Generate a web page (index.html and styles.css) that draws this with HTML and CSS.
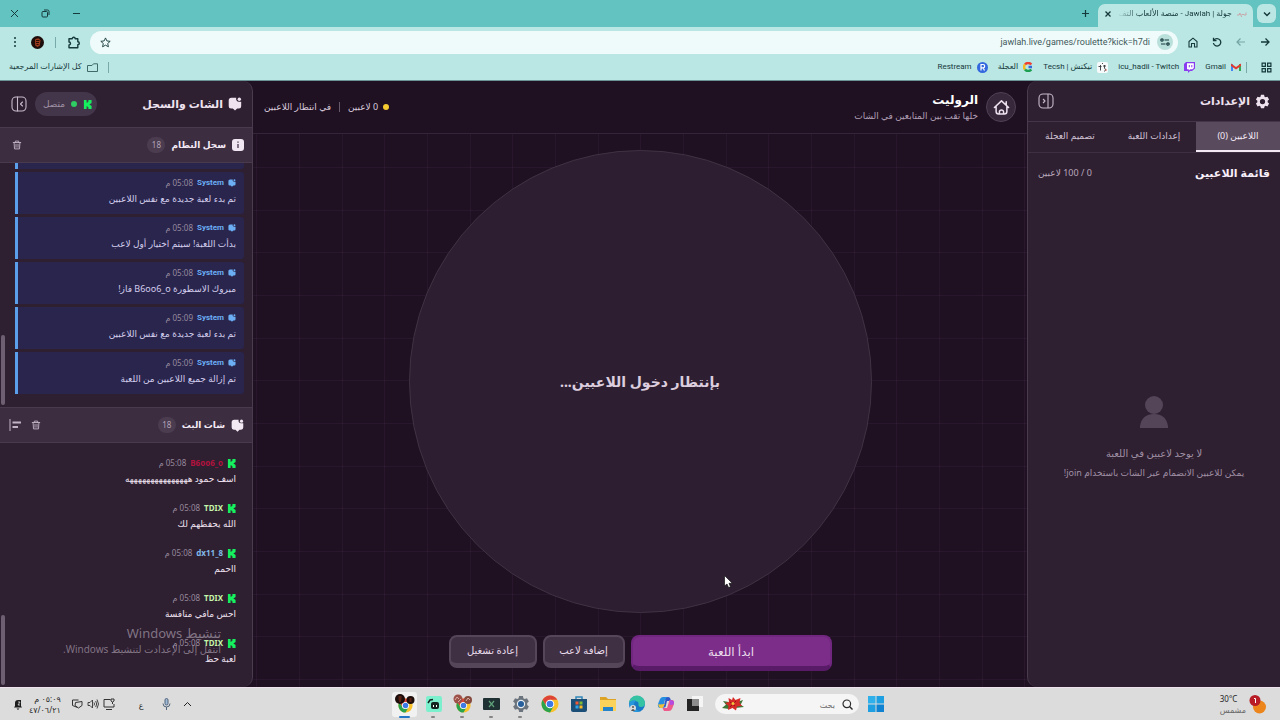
FILE: index.html
```html
<!DOCTYPE html>
<html lang="ar" dir="rtl">
<head>
<meta charset="utf-8">
<meta name="viewport" content="width=device-width, initial-scale=1">
<title>جولة | Jawlah - منصة الألعاب</title>
<link rel="stylesheet" href="styles.css">
</head>
<body>
<svg class="defs" aria-hidden="true">
  <symbol id="kick" viewBox="0 0 10 10"><path fill="#16f05e" d="M1 0h3v3h1V2h1V0h3.500v3.500h-1v1h-1v1h1v1h1V10H6V8H5V7H4v3H1z"/></symbol>
  <symbol id="chat" viewBox="0 0 14 14"><path fill="currentColor" d="M3.500.8h4.800a2.800 2.800 0 0 0 2.600 3.900h2.300v4.500a2.300 2.300 0 0 1-2.300 2.300H9.200L7 13.600l-2.200-2.100H3A2.300 2.300 0 0 1 .700 9.200V3.600A2.800 2.800 0 0 1 3.500.8z"/><circle cx="11.300" cy="2.300" r="1.700" fill="currentColor"/></symbol>
  <symbol id="trash" viewBox="0 0 12 12"><g fill="none" stroke="currentColor" stroke-width="1.100" stroke-linecap="round"><path d="M1.500 3h9M4 3V1.300h4V3M2.500 3.200l.5 7.500h6l.5-7.500M4.800 5v3.800M7.200 5v3.800"/></g></symbol>
  <symbol id="panel" viewBox="0 0 16 16"><g fill="none" stroke="currentColor" stroke-width="1.100" stroke-linecap="round" stroke-linejoin="round"><rect x="1" y="1" width="14" height="14" rx="4"/><path d="M6.500 1v14M11.500 6l-2 2 2 2"/></g></symbol>
  <symbol id="house" viewBox="0 0 18 18"><g fill="none" stroke="currentColor" stroke-width="1.600" stroke-linecap="round" stroke-linejoin="round"><path d="M1.500 9 9 2l7.500 7M3.300 8v5.300Q3.300 16 6 16h6q2.700 0 2.700-2.700V8M14 6V2.800M6.800 15.500V13.800a2.200 2.200 0 0 1 4.400 0v1.700"/></g></symbol>
  <symbol id="gear" viewBox="0 0 16 16"><path fill="currentColor" fill-rule="evenodd" d="M6.300.8h3.400l.4 2 1.200.7 2-.7 1.700 3-1.500 1.400v1.600l1.500 1.400-1.700 3-2-.7-1.200.7-.4 2H6.300l-.4-2-1.200-.7-2 .7-1.700-3 1.500-1.400V7.200L1 5.800l1.700-3 2 .7 1.200-.7zM8 5.200a2.800 2.800 0 1 0 0 5.600 2.800 2.800 0 0 0 0-5.600z"/></symbol>
  <symbol id="chrome" viewBox="0 0 18 18"><circle cx="9" cy="9" r="8.500" fill="#f9c22b"/><path fill="#dd4337" d="M1.640 4.750A8.500 8.500 0 0 1 16.360 4.750H9L5.300 11z"/><path fill="#2ba24c" d="M1.640 4.750A8.500 8.500 0 0 0 9 17.500L12.700 11 9 13.200 5.300 11z"/><circle cx="9" cy="9" r="4.300" fill="#fff"/><circle cx="9" cy="9" r="3.300" fill="#3d79e4"/></symbol>
</svg>

<header class="browser">
  <div class="tabstrip">
    <button class="tab-menu" aria-label="البحث في علامات التبويب"><svg width="8" height="8" viewBox="0 0 8 8"><path d="M1 2.500 4 5.500l3-3" fill="none" stroke="#16393b" stroke-width="1.500"/></svg></button>
    <div class="tab"><svg width="11" height="6" viewBox="0 0 11 6"><path d="M0 4h2l1-2v2h2l1-1 1 1h2V1.500M4 5.500h1" fill="none" stroke="#c99da0" stroke-width=".9"/></svg><span class="tab-title">جولة | Jawlah - منصة الألعاب التف</span>
      <button class="plain" aria-label="إغلاق علامة التبويب"><svg width="8" height="8" viewBox="0 0 8 8"><path d="m1.500 1.500 5 5m0-5-5 5" stroke="#16393b" stroke-width="1.300"/></svg></button></div>
    <button class="plain new-tab" aria-label="علامة تبويب جديدة"><svg width="9" height="9" viewBox="0 0 9 9"><path d="M4.500 1v7M1 4.500h7" stroke="#16393b" stroke-width="1.200"/></svg></button>
    <div class="window-buttons">
      <button class="plain" aria-label="تصغير"><svg width="9" height="9" viewBox="0 0 9 9"><path d="M1 4.500h7" stroke="#16393b"/></svg></button>
      <button class="plain" aria-label="استعادة"><svg width="9" height="9" viewBox="0 0 9 9"><g fill="none" stroke="#16393b"><rect x="1" y="2.500" width="5.500" height="5.500" rx="1"/><path d="M3 1h3.500A1.500 1.500 0 0 1 8 2.500V6"/></g></svg></button>
      <button class="plain" aria-label="إغلاق"><svg width="9" height="9" viewBox="0 0 9 9"><path d="m1 1 7 7m0-7L1 8" stroke="#16393b"/></svg></button>
    </div>
  </div>
  <div class="toolbar">
    <button class="plain" aria-label="رجوع"><svg width="10" height="10" viewBox="0 0 10 10"><path d="M1 5h8M5.500 1.500 9 5 5.500 8.500" fill="none" stroke="#16393b" stroke-width="1.300"/></svg></button>
    <button class="plain" aria-label="تقدم"><svg width="10" height="10" viewBox="0 0 10 10"><path d="M9 5H1m3.500-3.500L1 5l3.500 3.500" fill="none" stroke="#74a5a5" stroke-width="1.200"/></svg></button>
    <button class="plain" aria-label="إعادة تحميل"><svg width="10" height="10" viewBox="0 0 10 10"><path d="M2 3.200A3.700 3.700 0 1 1 1.400 6M1.500.8V3.600h3" fill="none" stroke="#16393b" stroke-width="1.300"/></svg></button>
    <button class="plain" aria-label="الصفحة الرئيسية"><svg width="10" height="11" viewBox="0 0 10 11"><path d="M1 4.500 5 1.200l4 3.300V10H6.500V6.500h-3V10H1z" fill="none" stroke="#16393b" stroke-width="1.100"/></svg></button>
    <div class="address">
      <button class="site-info" aria-label="معلومات الموقع"><svg width="10" height="8" viewBox="0 0 10 8"><g fill="none" stroke="#16393b" stroke-width="1.200"><circle cx="2" cy="2" r="1.200"/><path d="M4.500 2H9M1 6h4.500"/><circle cx="8" cy="6" r="1.200"/></g></svg></button>
      <input type="text" dir="ltr" aria-label="عنوان الموقع" value="jawlah.live/games/roulette?kick=h7di">
      <button class="plain" aria-label="إضافة إشارة"><svg width="11" height="11" viewBox="0 0 12 12"><path d="m6 1 1.500 3.300 3.600.4-2.700 2.400.8 3.600L6 8.900l-3.200 1.800.8-3.600L.9 4.700l3.600-.4z" fill="none" stroke="#16393b" stroke-linejoin="round"/></svg></button>
    </div>
    <button class="plain ext" aria-label="الإضافات"><svg width="13" height="13" viewBox="0 0 13 13"><path d="M2 2.800h3.200a1.500 1.500 0 0 1 3 0h2.600v3a1.500 1.500 0 0 1 0 3v3H2V9a1.500 1.500 0 0 0 0-3z" fill="none" stroke="#16393b" stroke-width="1.400" stroke-linejoin="round"/></svg></button>
    <i class="bar"></i>
    <button class="plain avatar" aria-label="الملف الشخصي"><svg width="13" height="13" viewBox="0 0 13 13"><circle cx="6.500" cy="6.500" r="6.500" fill="#1d0d0b"/><path d="M4 3.500 6 2.500h2l1.500 2-.7 5L6.500 11 4.200 9.500z" fill="#9b3b1c"/><path d="M5 4.500h3.500M5 6.500h3M5.500 8.500h2" stroke="#2b0d08"/></svg></button>
    <button class="plain" aria-label="المزيد"><svg width="4" height="12" viewBox="0 0 4 12"><g fill="#16393b"><circle cx="2" cy="2" r="1"/><circle cx="2" cy="6" r="1"/><circle cx="2" cy="10" r="1"/></g></svg></button>
  </div>
  <nav class="bookmarks">
    <button class="plain" aria-label="التطبيقات"><svg width="11" height="11" viewBox="0 0 10 10"><path d="M1 1h3v3H1zM6 1h3v3H6zM1 6h3v3H1zM6 6h3v3H6z" fill="none" stroke="#16393b" stroke-width="1.100"/></svg></button>
    <i class="bar thin"></i>
    <a href="#"><svg width="10" height="8" viewBox="0 0 10 8"><path d="M0 1h2v7H0z" fill="#4285f4"/><path d="M8 1h2v7H8z" fill="#34a853"/><path d="M0 .5 5 4l5-3.500V3L5 6.500 0 3z" fill="#e33b2e"/></svg><span>Gmail</span></a>
    <a href="#"><svg width="11" height="11" viewBox="0 0 11 11"><path d="M2 0h9v6.500L8 9H6l-2 2V9H0V2z" fill="#8a3df0"/><path d="M3 1.300h6.800v4.600L8.300 7.300H6.200L4.800 8.500V7.300H3z" fill="#fff"/><path d="M5.300 3v2.300M7.800 3v2.300" stroke="#8a3df0"/></svg><bdi>icu_hadii - Twitch</bdi></a>
    <a href="#"><svg width="11" height="11" viewBox="0 0 11 11"><rect width="11" height="11" rx="2" fill="#f7fafa"/><g fill="none" stroke="#35383b" stroke-width=".9"><path d="M1.500 4.500h3M3.500 3v5.500M6 4h3M7.500 3v3q2 1.500 0 3.500"/><path d="M5 1.500h1"/></g><circle cx="9" cy="8" r=".7" fill="#c3402f"/></svg><bdi dir="ltr">Tecsh | تيكتش</bdi></a>
    <a href="#"><svg width="10" height="10" viewBox="0 0 10 10"><g fill="none" stroke-width="2.500"><path d="M8.300 2.500A4 4 0 0 0 2 2.500" stroke="#ee4032"/><path d="M2 2.500a4 4 0 0 0 0 5" stroke="#f5b81e"/><path d="M2 7.500A4 4 0 0 0 8.300 7.500" stroke="#1c9f50"/><path d="M5.500 5H9" stroke="#3568db"/></g></svg><span>العجلة</span></a>
    <a href="#"><svg width="11" height="11" viewBox="0 0 11 11"><circle cx="5.500" cy="5.500" r="5.500" fill="#3368df"/><path d="M4 8.500v-6h2a1.600 1.600 0 0 1 0 3.300H4m2 0 1.500 2.700" stroke="#fff" stroke-width="1.200" fill="none"/></svg><span>Restream</span></a>
    <i class="bar last"></i>
    <a href="#"><svg width="11" height="9" viewBox="0 0 11 9"><path d="M.5 8.500v-6h4.500L6.500 .8h4v7.700z" fill="none" stroke="#40696a"/></svg><span>كل الإشارات المرجعية</span></a>
  </nav>
</header>

<main class="app">
  <aside class="side settings">
    <header class="settings-head"><h2><svg width="15" height="15"><use href="#gear"/></svg>الإعدادات</h2>
      <button class="plain panel-toggle" aria-label="طي الإعدادات"><svg width="16" height="16" viewBox="0 0 16 16"><g fill="none" stroke="currentColor" stroke-width="1.100" stroke-linejoin="round"><rect x="1" y="1" width="14" height="14" rx="4"/><path d="M10 1v14M5 6l2 2-2 2"/></g></svg></button></header>
    <div class="tabs" role="tablist"><button role="tab" class="on" aria-selected="true">اللاعبين (0)</button><button role="tab">إعدادات اللعبة</button><button role="tab">تصميم العجلة</button></div>
    <div class="list-head"><h3>قائمة اللاعبين</h3><span>0 / 100 لاعبين</span></div>
    <div class="empty">
      <svg width="30" height="33" viewBox="0 0 30 33"><circle cx="15" cy="9" r="9" fill="#554559"/><path d="M1 32V30Q3 18 15 18T29 30v2z" fill="#554559"/></svg>
      <p>لا يوجد لاعبين في اللعبة</p><p class="small">يمكن للاعبين الانضمام عبر الشات باستخدام <span>join!</span></p>
    </div>
  </aside>

  <section class="stage">
    <header class="stage-head">
      <button class="home" aria-label="الرئيسية"><svg width="17" height="17"><use href="#house"/></svg></button>
      <div class="title"><h1>الروليت</h1><p>خلها تقب بين المتابعين في الشات</p></div>
      <div class="status"><i class="dot yellow"></i><span>0 لاعبين</span><i class="sep"></i><span>في انتظار اللاعبين</span></div>
    </header>
    <div class="board">
      <div class="wheel">بإنتظار دخول اللاعبين...</div>
      <div class="actions"><button class="primary">ابدأ اللعبة</button><button class="add">إضافة لاعب</button><button class="restart">إعادة تشغيل</button></div>
    </div>
  </section>

  <aside class="side chat">
    <header class="chat-head"><h2><svg width="14" height="14"><use href="#chat"/></svg>الشات والسجل</h2>
      <span class="online"><svg width="9" height="9"><use href="#kick"/></svg><i class="dot green"></i>متصل</span>
      <button class="plain panel-toggle" aria-label="طي الشات"><svg width="16" height="16"><use href="#panel"/></svg></button></header>
    <header class="sub-head"><h3><svg width="12" height="12" viewBox="0 0 12 12"><rect width="12" height="12" rx="3" fill="#f1e7f2"/><path d="M6 5v4M6 2.500v1.300" stroke="#5c4b60" stroke-width="1.500"/></svg>سجل النظام</h3><span class="count">18</span>
      <button class="plain" aria-label="مسح السجل"><svg width="10" height="10"><use href="#trash"/></svg></button></header>
    <div class="log">
      <article></article>
      <article><div class="meta"><svg width="8" height="8"><use href="#chat"/></svg><b>System</b><time>05:08 م</time></div><p>تم بدء لعبة جديدة مع نفس اللاعبين</p></article>
      <article><div class="meta"><svg width="8" height="8"><use href="#chat"/></svg><b>System</b><time>05:08 م</time></div><p>بدأت اللعبة! سيتم اختيار أول لاعب</p></article>
      <article><div class="meta"><svg width="8" height="8"><use href="#chat"/></svg><b>System</b><time>05:08 م</time></div><p>مبروك الاسطورة <bdi>B6oo6_o</bdi> فاز!</p></article>
      <article><div class="meta"><svg width="8" height="8"><use href="#chat"/></svg><b>System</b><time>05:09 م</time></div><p>تم بدء لعبة جديدة مع نفس اللاعبين</p></article>
      <article><div class="meta"><svg width="8" height="8"><use href="#chat"/></svg><b>System</b><time>05:09 م</time></div><p>تم إزالة جميع اللاعبين من اللعبة</p></article>
      <i class="thumb"></i>
    </div>
    <header class="sub-head"><h3><svg width="13" height="13"><use href="#chat"/></svg>شات البث</h3><span class="count">18</span>
      <button class="plain" aria-label="مسح الشات"><svg width="10" height="10"><use href="#trash"/></svg></button>
      <button class="plain align" aria-label="محاذاة"><svg width="12" height="12" viewBox="0 0 12 12"><path d="M1 0v12" stroke="currentColor"/><path d="M3.500 3.500H12M3.500 8H9" stroke="currentColor" stroke-width="2"/></svg></button></header>
    <div class="messages">
      <article><div class="meta"><svg width="9" height="9"><use href="#kick"/></svg><b class="red"><bdi>B6oo6_o</bdi></b><time>05:08 م</time></div><p>اسف حمود هههههههههههههههه</p></article>
      <article><div class="meta"><svg width="9" height="9"><use href="#kick"/></svg><b class="lime">TDIX</b><time>05:08 م</time></div><p>الله يحفظهم لك</p></article>
      <article><div class="meta"><svg width="9" height="9"><use href="#kick"/></svg><b class="blue"><bdi>dx11_8</bdi></b><time>05:08 م</time></div><p>ااحمم</p></article>
      <article><div class="meta"><svg width="9" height="9"><use href="#kick"/></svg><b class="lime">TDIX</b><time>05:08 م</time></div><p>احس مافي منافسة</p></article>
      <article><div class="meta"><svg width="9" height="9"><use href="#kick"/></svg><b class="lime">TDIX</b><time>05:08 م</time></div><p>لعبة حظ</p></article>
      <i class="thumb"></i>
      <div class="activate"><strong>تنشيط Windows</strong><span>انتقل إلى الإعدادت لتنشيط Windows.</span></div>
    </div>
  </aside>
</main>

<footer class="taskbar">
  <div class="weather"><svg width="18" height="19" viewBox="0 0 18 19"><circle cx="10.500" cy="12" r="6.500" fill="#ec861c"/><circle cx="6" cy="5.500" r="5.500" fill="#b71c27"/><path d="M5 3.500h1.500V8" stroke="#fff" fill="none"/></svg><div><span dir="ltr">30°C</span><span class="soft">مشمس</span></div></div>
  <div class="dock">
    <button aria-label="ابدأ"><svg width="16" height="16" viewBox="0 0 16 16"><path fill="#2fb0ea" d="M0 0h7.500v7.500H0z"/><path fill="#1e9fe2" d="M8.500 0H16v7.500H8.500zM0 8.500h7.500V16H0z"/><path fill="#0f83d2" d="M8.500 8.500H16V16H8.500z"/></svg></button>
    <label class="search"><svg width="11" height="11" viewBox="0 0 11 11"><circle cx="4.800" cy="4.800" r="3.800" fill="none" stroke="#2c2c2c" stroke-width="1.200"/><path d="m7.500 7.500 3 3" stroke="#2c2c2c" stroke-width="1.400"/></svg><input type="text" placeholder="بحث" aria-label="بحث">
      <svg width="24" height="14" viewBox="0 0 24 14"><path d="M1 11 7 6l5 4-4 2zM23 10l-6-4-3 5zM2 4l6 1-2 4zM22 3l-6 2 3 4z" fill="#3c7534"/><path d="m12 0 2.500 3 5-2-1 4.500L21 9l-5 .5-1 4-3.500-2.500L7 13l.5-4L4 6l4-1L7.500 1 11 3z" fill="#d62a27"/><path d="M9 5l5 4M15 4 9 10" stroke="#931518"/><circle cx="12" cy="6.500" r="1.500" fill="#f1c33d"/></svg></label>
    <button aria-label="عرض المهام"><svg width="18" height="18" viewBox="0 0 18 18"><path fill="#f5f5f5" d="M6 1h11v11H6z"/><path fill="#242424" d="M1 4h5v7h7v5H1z"/><path fill="#8c8c8c" d="M6 4h7v7H6z"/></svg></button>
    <button aria-label="Copilot"><svg width="18" height="18" viewBox="0 0 18 18"><path d="M6 2h5l1.500 3H8L5.500 13H3.500C1 13 .5 11 1.200 8.500L3 4Q4 2 6 2z" fill="#268fe0"/><path d="M11 2q2 0 2.500 2l.5 2h-4L8.500 12 6 13 9 3z" fill="#3158c9"/><path d="M12 16H7l-1.500-3H10L12.500 5h2c2.500 0 3 2 2.300 4.500L15 14q-1 2-3 2z" fill="#ee5b8a"/><path d="M3 9.500 8 9l-2.500 4H3.500Q1 12.500 1.500 9z" fill="#f2c038"/><path d="m13 5 3 .5q1.500 1 .8 4L13 10z" fill="#b44be0"/></svg></button>
    <button aria-label="Edge"><svg width="18" height="18" viewBox="0 0 18 18"><circle cx="9" cy="9" r="8" fill="#1879c7"/><path d="M1 9a8 8 0 0 1 16-1q0 4-4 4-3 0-2.500-3T6 6 1 9z" fill="#35c3a4"/><path d="M1 9q2-5 7-3.500Q5 8 6.500 12T13 16Q5 19 2 13z" fill="#2797dd"/><circle cx="5" cy="13" r="3" fill="#d9dadb"/><circle cx="5" cy="12" r="1" fill="#545454"/><path d="M3 16q2-4 4 0" fill="#545454"/></svg></button>
    <button aria-label="الملفات"><svg width="18" height="16" viewBox="0 0 18 16"><path fill="#dda324" d="M1 1h6l2 2h8v4H1z"/><path fill="#fbd35a" d="M1 4h16v11H1z"/><path fill="#2583ca" d="M4 11h10v4H4z"/></svg></button>
    <button aria-label="المتجر"><svg width="18" height="18" viewBox="0 0 18 18"><path d="M6 4V2h6v2" fill="none" stroke="#3187b9" stroke-width="1.500"/><path fill="#1c4f78" d="M1 4h16v11q0 2-2 2H3q-2 0-2-2z"/><path fill="#f05a35" d="M5.500 6.500h3v3h-3z"/><path fill="#7fbb35" d="M9.500 6.500h3v3h-3z"/><path fill="#2ca4ea" d="M5.500 10.500h3v3h-3z"/><path fill="#fbba22" d="M9.500 10.500h3v3h-3z"/></svg></button>
    <button aria-label="Chrome"><svg width="18" height="18"><use href="#chrome"/></svg></button>
    <button aria-label="الإعدادات" class="run"><svg width="18" height="18" viewBox="0 0 16 16"><circle cx="8" cy="8" r="5" fill="#e8eef3"/><path fill="#6b747d" fill-rule="evenodd" d="M6.300.8h3.400l.4 2 1.200.7 2-.7 1.700 3-1.500 1.400v1.600l1.500 1.400-1.700 3-2-.7-1.200.7-.4 2H6.300l-.4-2-1.200-.7-2 .7-1.700-3 1.500-1.400V7.200L1 5.800l1.700-3 2 .7 1.200-.7zM8 4.300a3.700 3.700 0 1 0 0 7.400 3.700 3.700 0 0 0 0-7.400z"/><circle cx="8" cy="8" r="2.700" fill="#27609c"/></svg></button>
    <button aria-label="Xbox" class="run"><svg width="17" height="14" viewBox="0 0 17 14"><rect y="1" width="17" height="12" rx="1" fill="#1f3132"/><path d="m6 4 5 6m0-6-5 6" stroke="#60a17b" stroke-width="1.200"/></svg></button>
    <button aria-label="Chrome 2" class="run"><svg width="20" height="20" viewBox="0 0 20 20"><use href="#chrome" x="3" y="4" width="15" height="15"/><circle cx="5" cy="5" r="4.500" fill="#9d5148"/><circle cx="15" cy="6" r="4" fill="#864b3e"/><path d="M2 6l2-3 2 2M5 8l3-3M13 7l2-3 2 2" stroke="#d8aaa0" fill="none"/></svg></button>
    <button aria-label="تطبيق البث" class="run"><svg width="18" height="18" viewBox="0 0 18 18"><rect x="1" y="1" width="16" height="16" rx="2" fill="#7cf0cc"/><rect x="6" y="7" width="8" height="7" rx="2" fill="#14241f"/><path d="m3 8 2-3 3-.5" stroke="#14241f" fill="none" stroke-width="1.500"/><path d="M8.500 10v2M11.500 10v2" stroke="#fff"/></svg></button>
    <button aria-label="Chrome 1" class="run current"><svg width="20" height="20" viewBox="0 0 20 20"><use href="#chrome" x="3" y="4" width="15" height="15"/><circle cx="5" cy="5" r="5" fill="#1d0d0b"/><circle cx="15.500" cy="6" r="4" fill="#1d0d0b"/><path d="M3.500 3h3M3.500 5h3M4 7h2M14.500 5h2M14.500 7h2" stroke="#96391d"/></svg></button>
  </div>
  <div class="tray">
    <svg width="9" height="6" viewBox="0 0 9 6"><path d="m1 5 3.500-3.500L8 5" fill="none" stroke="#222"/></svg>
    <svg class="mic" width="9" height="12" viewBox="0 0 9 12"><rect x="3" y=".5" width="3" height="6.500" rx="1.500" fill="#9eb9d6" stroke="#51657d"/><path d="M1 5.500a3.500 3.500 0 0 0 7 0M4.500 9v3" fill="none" stroke="#51657d"/></svg>
    <span class="lang">ع</span>
    <span class="net"><svg width="12" height="12" viewBox="0 0 12 12"><path d="M7.500 1.500H1v7.500h10V6M3 11.500h6M9.500 6V4M8 1v2q1.500 2 3 0V1z" fill="none" stroke="#333"/></svg><svg width="12" height="12" viewBox="0 0 12 12"><path d="M1 4.500h2L5.500 2v8L3 7.500H1zM7 4.500q1 1.500 0 3M8.700 3q2 3 0 6M10 1.500q3 4.500 0 9" fill="none" stroke="#333" stroke-width=".9"/></svg><svg width="12" height="12" viewBox="0 0 12 12"><path d="M6.500 9.500 1.500 7.500V2h6M4.500 4.500l6.500-1v4L7.500 10 4 7.500z" fill="none" stroke="#333"/></svg></span>
    <div class="clock"><span>٠٥:٠٩ م</span><span>٤٧/٠٦/٢١</span></div>
    <svg width="10" height="11" viewBox="0 0 10 11"><path d="M1 8.500 2 7V4q0-3 3-3h3v6l1 1.500zM3.500 9.500h3L5 11z" fill="#1d1d1d"/><path d="M5 3h2L5 6h2" fill="none" stroke="#ddd" stroke-width=".8"/></svg>
  </div>
</footer>
<svg class="cursor" width="9" height="13" viewBox="0 0 9 13"><path d="M.5.500v10.500l2.500-2 1.600 3.600 1.900-.8L5 8.300h3.300z" fill="#fff" stroke="#111" stroke-width=".7"/></svg>
</body>
</html>
```
FILE: styles.css
```css
* { box-sizing: border-box; }
body {
  margin: 0; height: 100vh; min-height: 560px; display: flex; flex-direction: column; overflow: hidden;
  position: relative; background: #1f1022; color: #eee2ef;
  font: 9px/14px "Noto Sans", "DejaVu Sans", sans-serif;
}
h1, h2, h3, p { margin: 0; }
svg { display: block; flex: none; }
button, input { font: inherit; color: inherit; }
button { padding: 0; }
.defs { position: absolute; width: 0; height: 0; }
.plain { border: 0; background: none; display: grid; place-items: center; flex: none; }

.browser { background: #bae7e4; color: #16393b; border-bottom: 1px solid #6b9294; }
.tabstrip { height: 27px; background: #62c3c0; display: flex; align-items: center; padding: 0 4px 0 10px; }
.tab-menu { width: 19px; height: 19px; border: 0; border-radius: 6px; background: #bae7e4; display: grid; place-items: center; margin-left: 4px; }
.tab { width: 155px; height: 23px; align-self: flex-end; background: #bae7e4; border-radius: 7px 7px 0 0; display: flex; align-items: center; gap: 5px; padding: 0 5px 4px 6px; }
.tab-title { flex: 1; white-space: nowrap; font-size: 8px; font-family: Roboto, "DejaVu Sans", sans-serif; mask-image: linear-gradient(to left, #000 80%, transparent); }
.new-tab { margin-right: 8px; }
.window-buttons { margin-right: auto; display: flex; gap: 22px; }
.toolbar { height: 30px; display: flex; align-items: center; gap: 14px; padding: 0 10px 0 13px; }
.address { flex: 1; height: 23px; border-radius: 12px; background: #effbfa; display: flex; align-items: center; gap: 5px; padding: 0 5px 0 10px; margin-right: -4px; }
.site-info { width: 16px; height: 16px; border: 0; border-radius: 50%; background: #bae0dc; display: grid; place-items: center; }
.address input { flex: 1; min-width: 0; border: 0; padding: 0 2px; background: none; text-align: right; font-size: 9px; font-family: Roboto, sans-serif; outline: 0; color: #41595b; }
.bar { width: 1px; height: 11px; background: #79aaaa; }
.toolbar .bar { margin: 0 -3px; }
.ext { margin-right: -4px; }
.bookmarks { height: 23px; display: flex; align-items: center; gap: 10px; padding: 0 8px 3px 9px; font-size: 8px; font-family: Roboto, "DejaVu Sans", sans-serif; }
.bookmarks a { color: inherit; text-decoration: none; display: flex; align-items: center; gap: 5px; white-space: nowrap; }
.bookmarks .thin { margin-left: -5px; margin-right: 4px; }
.bookmarks .last { margin-right: auto; }

.app { flex: 1; min-height: 0; display: grid; grid-template-columns: 253px minmax(0, 1fr) 253px; }
.side { background: #2e1f31; display: flex; flex-direction: column; min-height: 0; overflow: hidden; }
.settings { border-left: 1px solid #4a3b4e; border-radius: 10px 0 0 10px; }
.chat { border-right: 1px solid #4a3b4e; border-radius: 0 10px 10px 0; position: relative; }
h2 { font-size: 11px; line-height: 18px; display: flex; align-items: center; gap: 5px; }
h3 { font-size: 11px; line-height: 16px; }
.panel-toggle { color: #c8b9cb; }
.settings-head { height: 41px; flex: none; display: flex; align-items: center; justify-content: space-between; padding: 0 10px; border-bottom: 1px solid #44354a; }
.tabs { display: grid; grid-template-columns: repeat(3, 1fr); height: 31px; flex: none; border-bottom: 1px solid #3e2f42; }
.tabs button { border: 0; border-bottom: 2px solid transparent; background: none; color: #d0c2d3; white-space: nowrap; }
.tabs .on { background: #5a4a5d; border-color: #f3e9f4; color: #f3e9f4; }
.list-head { display: flex; align-items: center; justify-content: space-between; padding: 12px 10px; color: #b8a8bb; }
.list-head h3 { color: #f8eff9; }
.empty { flex: 1; display: flex; flex-direction: column; align-items: center; justify-content: center; color: #a090a4; font-size: 10px; padding-bottom: 4px; white-space: nowrap; }
.empty p { margin-top: 16px; line-height: 16px; }
.empty .small { font-size: 9px; margin-top: 4px; }

.stage { display: flex; flex-direction: column; min-width: 0; min-height: 0; }
.stage-head { height: 53px; flex: none; border-bottom: 1px solid #35253a; display: flex; align-items: center; gap: 8px; padding: 0 11px; }
.home { width: 30px; height: 30px; border: 1px solid #514155; border-radius: 50%; background: #37283c; display: grid; place-items: center; }
.title h1 { font-size: 12px; line-height: 16px; color: #fff; }
.title p { color: #b09fb4; line-height: 15px; }
.status { margin-right: auto; display: flex; align-items: center; gap: 5px; color: #d9cbdc; }
.dot { width: 6px; height: 6px; border-radius: 50%; }
.yellow { background: #f5cb31; }
.green { background: #2ecc62; }
.sep { width: 1px; height: 10px; background: #67576b; margin: 0 3px; }
.board {
  --line: rgba(105, 75, 112, .13);
  flex: 1; min-height: 0; display: flex; flex-direction: column; align-items: center; gap: 22px; padding: 16px 0;
  background-image:
    linear-gradient(to right, var(--line) 1px, transparent 1px), linear-gradient(to right, var(--line) 1px, transparent 1px), linear-gradient(to right, var(--line) 1px, transparent 1px),
    linear-gradient(var(--line) 1px, transparent 1px), linear-gradient(var(--line) 1px, transparent 1px), linear-gradient(var(--line) 1px, transparent 1px);
  background-size: 128px 128px;
  background-position: 46px 0, 89px 0, 131px 0, 0 33px, 0 76px, 0 118px;
}
.wheel { flex: 1 1 0; min-height: 0; aspect-ratio: 1; border: 1px solid #403143; border-radius: 50%; background: #2d1f31; display: grid; place-items: center; font-size: 14px; font-weight: 700; color: #dccddf; }
.actions { height: 36px; display: flex; gap: 6px; align-items: flex-start; }
.actions button { height: 33px; border: 2px solid #55465a; border-bottom-width: 5px; border-radius: 8px; background: #403044; color: #e9dceb; font-size: 10px; white-space: nowrap; }
.actions .primary { width: 201px; height: 36px; border-color: #712780; border-bottom-color: #591b68; background: #7c2c89; font-size: 12px; }
.actions .add { width: 82px; }
.actions .restart { width: 88px; }

.chat-head { height: 46px; flex: none; display: flex; align-items: center; padding: 0 10px 0 11px; gap: 8px; }
.online { margin-right: auto; height: 24px; border-radius: 12px; background: #44364a; display: flex; align-items: center; gap: 6px; padding: 0 5px 0 8px; color: #9f91a4; }
.sub-head { height: 36px; flex: none; display: flex; align-items: center; gap: 6px; padding: 0 8px 0 9px; background: #3c2d40; border-top: 1px solid #493a4d; border-bottom: 1px solid #493a4d; color: #c2b4c5; }
.sub-head h3 { font-size: 9px; display: flex; align-items: center; gap: 6px; color: #f3e9f4; }
.sub-head .count { margin-left: auto; }
.sub-head button:last-child { margin-left: 3px; }
.sub-head .align { margin-right: 4px; }
.sub-head .align:last-child { margin-left: 0; }
.count { min-width: 18px; height: 16px; border-radius: 8px; background: #4b3c50; color: #b3a4b7; font-size: 8px; line-height: 16px; text-align: center; }
.log, .messages { position: relative; overflow: hidden; display: flex; flex-direction: column; justify-content: flex-end; min-height: 0; }
.log { flex: 1 1 0; padding: 0 8px 13px 15px; gap: 3px; }
.log article { height: 42px; flex: none; background: #29254d; border-left: 3px solid #5b9ee9; padding: 3px 8px; border-radius: 0 3px 3px 0; color: #d3cdec; }
.messages { flex: 1 1 0; padding: 0 16px 13px; gap: 3px; }
.messages article { height: 42px; flex: none; padding-top: 3px; }
.meta { display: flex; align-items: center; gap: 4px; height: 16px; color: #6caef4; font-size: 8px; }
.log b { font-family: Roboto, sans-serif; }
.meta time { color: #988a9d; }
.messages p, .log p { line-height: 16px; white-space: nowrap; }
.red { color: #b3123e; } .lime { color: #c5f5a8; } .blue { color: #82b9e8; }
.thumb { position: absolute; left: 1px; bottom: 2px; width: 4px; height: 70px; border-radius: 2px; background: #6e6072; }
.activate { position: absolute; right: 31px; bottom: 31px; display: flex; flex-direction: column; color: rgba(200, 190, 203, .55); font-size: 10px; line-height: 14px; white-space: nowrap; }
.activate strong { font-size: 13px; line-height: 17px; font-weight: 400; }

.taskbar { height: 33px; flex: none; display: grid; grid-template-columns: 1fr auto 1fr; align-items: center; background: #dcdcdc; border-top: 1px solid #eee3ed; color: #262626; padding: 0 13px; font-size: 8px; line-height: 11px; }
.weather, .tray { display: flex; align-items: center; gap: 3px; }
.weather div, .clock { display: flex; flex-direction: column; }
.soft { color: #666; }
.dock { display: flex; align-items: center; gap: 4px; }
.dock button { width: 25px; height: 25px; border: 0; border-radius: 3px; background: none; display: grid; place-items: center; position: relative; }
.dock .run::after { content: ""; position: absolute; bottom: -1px; left: 10px; width: 4px; height: 2px; border-radius: 1px; background: #858585; }
.dock .current { background: #f1f1f1; }
.dock .current::after { left: 7px; width: 11px; background: #2477c8; }
.search { width: 144px; height: 20px; border-radius: 10px; background: #f5f5f5; display: flex; align-items: center; gap: 7px; padding: 0 6px; margin-left: 4px; }
.search input { width: 0; flex: 1; border: 0; padding: 0; background: none; outline: 0; }
.search input::placeholder { color: #666; opacity: 1; }
.tray { justify-content: flex-end; gap: 6px; }
.mic { margin: 0 6px 0 9px; }
.lang { margin: 0 3px 0 18px; }
.net { display: flex; gap: 4px; margin-left: 4px; }
.cursor { position: absolute; left: 724px; top: 575px; }
```
